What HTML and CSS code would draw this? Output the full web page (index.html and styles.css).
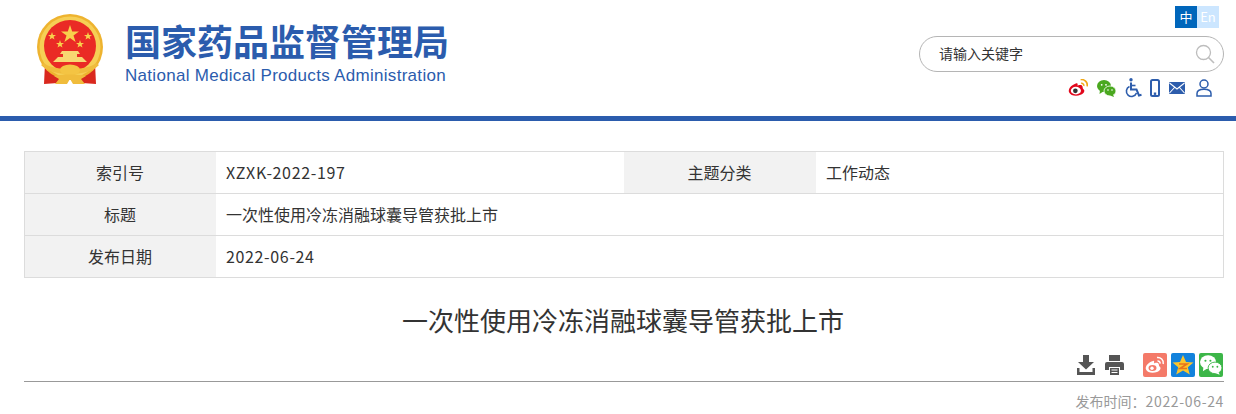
FILE: index.html
```html
<!DOCTYPE html>
<html lang="zh-CN">
<head>
  <title>一次性使用冷冻消融球囊导管获批上市</title>
  <meta charset="UTF-8">
  <link rel="stylesheet" href="styles.css">
</head>
<body>
  <!-- 页头 -->
  <header class="header">
    <div class="brand">
      <svg class="emblem" viewBox="0 0 70 74" width="70" height="74">
        <path d="M10 50 L9 71 L23 70 L35 64 L47 70 L61 71 L60 50 Z" fill="#d9281e"/>
        <circle cx="35" cy="34" r="33" fill="#eeb32f"/>
        <circle cx="35" cy="34" r="30.5" fill="#f6cf55"/>
        <circle cx="35" cy="33" r="26" fill="#ea2a25"/>
        <polygon points="35,12 37.2,18.6 44,18.6 38.5,22.6 40.6,29 35,25 29.4,29 31.5,22.6 26,18.6 32.8,18.6" fill="#f8d04c"/>
        <polygon points="17,19 18,22 21,22 18.6,23.8 19.5,26.6 17,25 14.5,26.6 15.4,23.8 13,22 16,22" fill="#f8d04c"/>
        <polygon points="53,19 54,22 57,22 54.6,23.8 55.5,26.6 53,25 50.5,26.6 51.4,23.8 49,22 52,22" fill="#f8d04c"/>
        <polygon points="25,27 26,30 29,30 26.6,31.8 27.5,34.6 25,33 22.5,34.6 23.4,31.8 21,30 24,30" fill="#f8d04c"/>
        <polygon points="45,27 46,30 49,30 46.6,31.8 47.5,34.6 45,33 42.5,34.6 43.4,31.8 41,30 44,30" fill="#f8d04c"/>
        <path d="M27 38 H43 L45 41 H42 V44 H47 L52 49 H18 L23 44 H28 V41 H25 Z" fill="#f8d772"/>
        <path d="M9 50 C18 58 52 58 61 50 L64 52 C54 64 16 64 6 52 Z" fill="#f0bc3c"/>
        <ellipse cx="35" cy="57" rx="10" ry="5.5" fill="#f4c443"/>
        <path d="M19 63 C26 61 44 61 51 63 L46 66 L50 71 H38 L35 66 L32 71 H20 L24 66 Z" fill="#f0bc3c"/>
      </svg>
      <div class="brand-text">
        <div class="brand-cn">国家药品监督管理局</div>
        <div class="brand-en">National Medical Products Administration</div>
      </div>
    </div>
    <div class="tools">
      <div class="lang">
        <a class="lang-item active">中</a>
        <a class="lang-item">En</a>
      </div>
      <div class="search">
        <span class="search-text">请输入关键字</span>
        <svg width="20" height="20" viewBox="0 0 20 20" fill="none" stroke="#bdbdbd">
          <circle cx="8.5" cy="8.5" r="7" stroke-width="1.3"/>
          <path d="M13.5 13.5 L19 19" stroke-width="1.6"/>
        </svg>
      </div>
      <div class="quick">
        <svg width="20" height="18" viewBox="0 1 19 17">
          <path d="M8 5 C2 7 0 11 1 13.5 C2.5 17 8 17.5 12 16 C15.5 14.5 16.5 12 14.5 10.5 C13.5 10 14.5 8 13 7 C11.5 6.3 9.5 7 9 7.3 C9.5 5.5 9 4.5 8 5 Z" fill="#e2071c"/>
          <ellipse cx="7.5" cy="12" rx="4.8" ry="3.6" fill="#fff"/>
          <circle cx="7" cy="12.2" r="2.2" fill="#333"/>
          <path d="M12 1.5 C15.5 1 19 4 18.2 8" fill="none" stroke="#f1a816" stroke-width="1.6"/>
          <path d="M12.5 5 C14 4.8 15.4 6 15 7.6" fill="none" stroke="#f1a816" stroke-width="1.4"/>
        </svg>
        <svg width="19" height="17" viewBox="0 0 19 17">
          <ellipse cx="7" cy="6" rx="7" ry="6" fill="#4aa81f"/>
          <path d="M3 10 L2.5 14 L7 11 Z" fill="#4aa81f"/>
          <ellipse cx="13" cy="11" rx="6" ry="5" fill="#4aa81f" stroke="#fff" stroke-width=".8"/>
          <path d="M16 14.5 L17 17 L13 15.5 Z" fill="#4aa81f"/>
          <circle cx="4.7" cy="4.8" r=".9" fill="#fff"/><circle cx="9" cy="4.8" r=".9" fill="#fff"/>
          <circle cx="11" cy="10" r=".8" fill="#fff"/><circle cx="15" cy="10" r=".8" fill="#fff"/>
        </svg>
        <svg class="quick-access" width="17" height="20" viewBox="0 0 17 20" fill="none" stroke="#2d5dac">
          <circle cx="6" cy="1.8" r="1.7" fill="#2d5dac" stroke="none"/>
          <path d="M6 4.5 V11.5 H11.5 L14 17.5 L16.5 16.8" stroke-width="2"/>
          <path d="M6 7.5 H10.5" stroke-width="1.6"/>
          <path d="M4.5 8.5 A5.2 5.2 0 1 0 11.5 15" stroke-width="1.6"/>
        </svg>
        <svg width="10" height="18" viewBox="0 0 10 18">
          <rect x="1" y="1" width="8" height="16" rx="1.5" fill="#fff" stroke="#2d5dac" stroke-width="2"/>
          <rect x="3.8" y="13.5" width="2.4" height="2.4" fill="#2d5dac"/>
        </svg>
        <svg width="16" height="12" viewBox="0 0 16 12">
          <rect width="16" height="12" rx="1" fill="#2d5dac"/>
          <path d="M.5 1 L8 7 L15.5 1 M.5 11 L5.5 5.5 M15.5 11 L10.5 5.5" fill="none" stroke="#fff" stroke-width="1.1"/>
        </svg>
        <svg width="16" height="18" viewBox="0 0 16 18" fill="none" stroke="#2d5dac" stroke-width="1.5">
          <circle cx="8" cy="5" r="4"/>
          <path d="M1 17 V14.5 C1 11.5 4 10.2 8 10.2 C12 10.2 15 11.5 15 14.5 V17 Z"/>
        </svg>
      </div>
    </div>
  </header>
  <div class="header-line"></div>

  <main class="main">
    <!-- 基本信息表 -->
    <div class="info">
      <div class="info-row">
        <div class="info-label">索引号</div>
        <div class="info-value num">XZXK-2022-197</div>
        <div class="info-label second">主题分类</div>
        <div class="info-value">工作动态</div>
      </div>
      <div class="info-row">
        <div class="info-label">标题</div>
        <div class="info-value">一次性使用冷冻消融球囊导管获批上市</div>
      </div>
      <div class="info-row">
        <div class="info-label">发布日期</div>
        <div class="info-value num">2022-06-24</div>
      </div>
    </div>

    <h1 class="title">一次性使用冷冻消融球囊导管获批上市</h1>

    <div class="actions">
      <svg class="act-download" width="18" height="20" viewBox="0 0 18 20" fill="#555">
        <path d="M6 0 H12 V7 H17 L9 14.5 L1 7 H6 Z"/>
        <path d="M0 13 H2.5 V17 H15.5 V13 H18 V20 H0 Z"/>
      </svg>
      <svg class="act-print" width="19" height="20" viewBox="0 0 19 20" fill="#555">
        <path d="M4 0 H15 V6 H4 Z"/>
        <path d="M2 7 H17 A2 2 0 0 1 19 9 V15 H15 V12 H4 V15 H0 V9 A2 2 0 0 1 2 7 Z"/>
        <path d="M5 13 H14 V20 H5 Z"/>
        <path d="M6.5 15 H12.5 M6.5 17.5 H12.5" stroke="#fff"/>
      </svg>
      <span class="share share-weibo">
        <svg width="20" height="18" viewBox="0 0 20 18">
          <path d="M8 5 C2 7 0 11 1 13.5 C2.5 17 8 17.5 12 16 C15.5 14.5 16.5 12 14.5 10.5 C13.5 10 14.5 8 13 7 C11.5 6.3 9.5 7 9 7.3 C9.5 5.5 9 4.5 8 5 Z" fill="#fff"/>
          <ellipse cx="7.5" cy="12" rx="4" ry="3" fill="#f47a69"/>
          <circle cx="7" cy="12.2" r="1.7" fill="#fff"/>
          <path d="M12 1.5 C15.5 1 19 4 18.2 8 M12.5 5 C14 4.8 15.4 6 15 7.6" fill="none" stroke="#fff" stroke-width="1.5"/>
        </svg>
      </span>
      <span class="share share-qzone">
        <svg width="22" height="22" viewBox="0 0 22 22">
          <polygon points="11,1 14,8 21.5,8.5 15.8,13.3 17.8,20.5 11,16.6 4.2,20.5 6.2,13.3 .5,8.5 8,8" fill="#fbc52d"/>
          <path d="M7 10 H15 L8 14.5 H15" fill="none" stroke="#e8731b" stroke-width="1.6"/>
        </svg>
      </span>
      <span class="share share-wechat">
        <svg width="22" height="20" viewBox="0 0 19 17">
          <ellipse cx="7" cy="6" rx="7" ry="6" fill="#fff"/>
          <path d="M3 10 L2.5 14 L7 11 Z" fill="#fff"/>
          <ellipse cx="13" cy="11" rx="6" ry="5" fill="#fff" stroke="#3cb648" stroke-width=".8"/>
          <path d="M16 14.5 L17 17 L13 15.5 Z" fill="#fff"/>
          <circle cx="4.7" cy="4.8" r=".9" fill="#3cb648"/><circle cx="9" cy="4.8" r=".9" fill="#3cb648"/>
          <circle cx="11" cy="10" r=".8" fill="#3cb648"/><circle cx="15" cy="10" r=".8" fill="#3cb648"/>
        </svg>
      </span>
    </div>

    <div class="publish">发布时间：<span class="num">2022-06-24</span></div>
  </main>
</body>
</html>
```

FILE: styles.css
```css
* {
  box-sizing: border-box;
}

html, body {
  height: 414px;
  overflow: hidden;
}

body {
  margin: 0;
  background: #fff;
  color: #333;
  font-family: "Noto Sans CJK SC", "Liberation Sans", sans-serif;
}

/* 页头 */
.header {
  display: flex;
  justify-content: space-between;
  height: 116px;
  padding: 0 12px 0 35px;
}

.brand {
  display: flex;
  padding-top: 13px;
}

.emblem {
  margin-right: 20px;
}

.brand-text {
  padding-top: 7px;
}

.brand-cn {
  height: 40px;
  color: #2b5cad;
  font-size: 36px;
  font-weight: 700;
  line-height: 40px;
  white-space: nowrap;
}

.brand-en {
  margin-top: 6px;
  color: #2b5cad;
  font-family: "Liberation Sans", sans-serif;
  font-size: 17px;
  letter-spacing: .3px;
  line-height: 20px;
  white-space: nowrap;
}

.tools {
  display: flex;
  flex-direction: column;
  align-items: flex-end;
  width: 305px;
  padding-top: 6px;
}

.lang {
  display: flex;
  margin-right: 5px;
}

.lang-item {
  width: 22px;
  height: 22px;
  background: #cce6ff;
  color: #fff;
  font-size: 13px;
  line-height: 22px;
  text-align: center;
}

.lang-item.active {
  background: #0066bb;
}

.search {
  display: flex;
  justify-content: space-between;
  align-items: center;
  width: 305px;
  height: 36px;
  margin-top: 8px;
  padding: 0 8px 0 19px;
  border: 1px solid #b5b5b5;
  border-radius: 18px;
}

.search-text {
  margin-top: -2px;
  font-size: 14px;
}

.quick {
  display: flex;
  align-items: center;
  gap: 9px;
  width: 156px;
  height: 20px;
  margin-top: 6px;
}

.quick-access {
  margin-right: -1px;
}

.quick svg:last-child {
  margin-left: 2px;
}

.header-line {
  height: 5px;
  background: #2b5cad;
}

/* 内容 */
.main {
  padding: 30px 12px 0 24px;
}

.info {
  border: 1px solid #dcdcdc;
  border-bottom: 0;
}

.info-row {
  display: flex;
  height: 42px;
  border-bottom: 1px solid #dcdcdc;
  font-size: 16px;
  line-height: 41px;
}

.info-label {
  width: 191px;
  padding-right: 1px;
  background: #f2f2f2;
  text-align: center;
}

.info-label.second {
  width: 192px;
}

.info-value {
  width: 408px;
  padding-left: 10px;
}

.info-row .info-value:last-child {
  flex: 1;
}

.num {
  letter-spacing: .65px;
}

.title {
  margin: 22px 0 0;
  padding-right: 2px;
  color: #333;
  font-size: 26px;
  font-weight: 400;
  line-height: 40px;
  text-align: center;
}

.actions {
  display: flex;
  justify-content: flex-end;
  align-items: center;
  gap: 4px;
  height: 29px;
  margin-top: 13px;
  padding: 0 1px 4px 0;
  border-bottom: 1px solid #999;
}

.act-download {
  margin-right: 6px;
}

.act-print {
  margin-right: 15px;
}

.share {
  display: flex;
  justify-content: center;
  align-items: center;
  width: 24px;
  height: 24px;
  border-radius: 2px;
}

.share-weibo {
  background: #f47a69;
}

.share-qzone {
  background: #1282dc;
}

.share-wechat {
  background: #3cb648;
}

.publish {
  margin-top: 9px;
  color: #999;
  font-size: 14px;
  line-height: 20px;
  text-align: right;
}
```
